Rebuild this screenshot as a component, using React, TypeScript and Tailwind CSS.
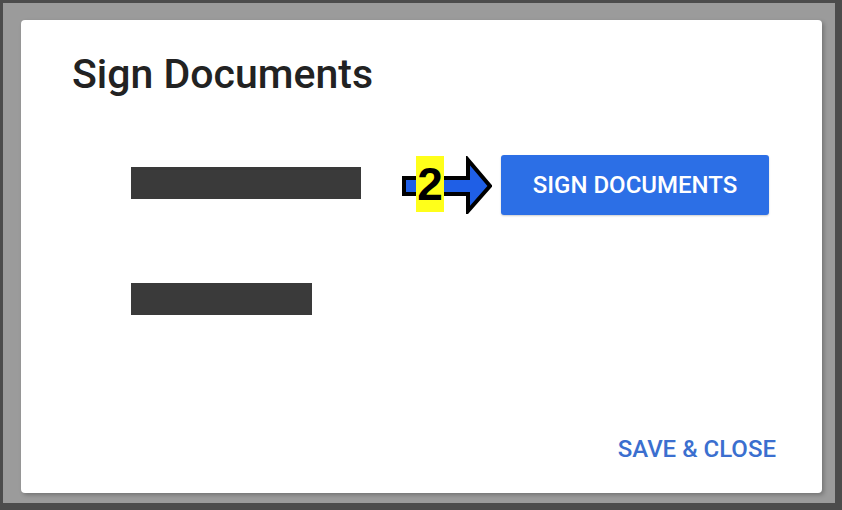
export default function App() {
  return (
    <div className="w-[842px] h-[510px] bg-[#9b9b9b] border-[#4c4c4c] border-t-[3px] border-l-[3px] border-r-[7px] border-b-[7px] pt-[17px] pl-[18px] font-['Roboto','Liberation_Sans',sans-serif]">
      <div className="relative w-[801px] h-[473px] bg-white rounded-[4px] shadow-[2px_2px_4px_rgba(0,0,0,0.25)] flex flex-col pl-[51px] pt-[30px] pr-[46px]">
        <h1 className="text-[41px] leading-[48px] font-medium text-[#222222]">
          Sign Documents
        </h1>

        <div className="flex flex-col pl-[59px] mt-[57px]">
          <div className="flex items-center h-[60px]">
            <div className="w-[230px] h-[32px] bg-[#3a3a3a] -mt-[4px]" />
            <button className="ml-[140px] w-[268px] h-[60px] bg-[#2c6fe6] rounded-[3px] text-white text-[24px] font-medium uppercase shadow-[0_1px_2px_rgba(0,0,0,0.2)]">
              Sign Documents
            </button>
          </div>
          <div className="w-[181px] h-[32px] bg-[#3a3a3a] mt-[68px]" />
        </div>

        <div className="mt-auto mb-[30px] flex justify-end">
          <button className="text-[24px] leading-[28px] font-medium uppercase text-[#3b6fcf]">
            Save &amp; Close
          </button>
        </div>

        {/* annotation arrow */}
        <div className="absolute left-[381px] top-[136px] w-[90px] h-[58px]">
          <svg width="90" height="58" viewBox="0 0 90 58" className="absolute left-0 top-0">
            <polygon
              points="2,22 66,22 66,4 88,30 66,55 66,38 2,38"
              fill="#1f5fe6"
              stroke="#000"
              strokeWidth="4"
              strokeLinejoin="miter"
            />
          </svg>
          <div className="absolute left-[14px] top-0 w-[28px] h-[56px] bg-[#ffff1a] flex items-center justify-center">
            <span className="text-[46px] leading-none font-bold text-black font-['Liberation_Sans',sans-serif]">2</span>
          </div>
        </div>
      </div>
    </div>
  );
}
